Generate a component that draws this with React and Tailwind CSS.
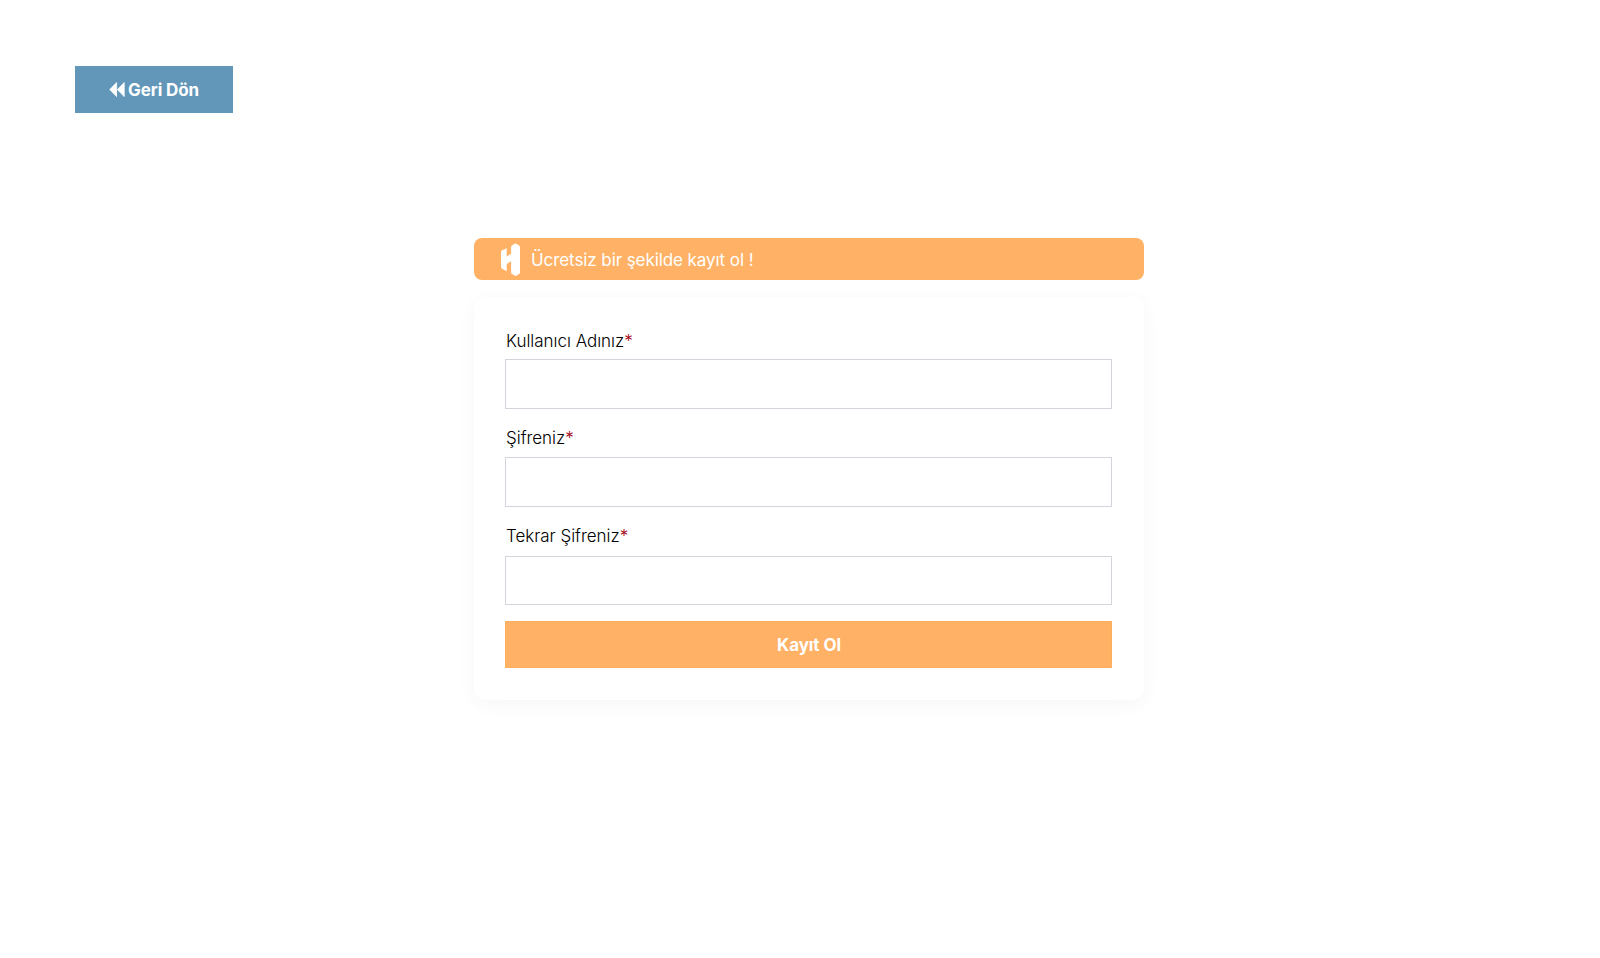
import { useState } from "react";

const fields = [
  { name: "username", label: "Kullanıcı Adınız", type: "text", box: "mt-[8px] h-[50px]", wrap: "" },
  { name: "password", label: "Şifreniz", type: "password", box: "mt-[9px] h-[50px]", wrap: "mt-[15px]" },
  { name: "passwordAgain", label: "Tekrar Şifreniz", type: "password", box: "mt-[10px] h-[49px]", wrap: "mt-[15px]" },
];

function BackIcon() {
  return (
    <svg width="16" height="16" viewBox="0 0 16 16" fill="white" stroke="white" strokeWidth="0.8" strokeLinejoin="round">
      <path d="M7.6.6V14.6L.8 7.6Z" />
      <path d="M15.2.6V14.6L8.4 7.6Z" />
    </svg>
  );
}

function Logo() {
  return (
    <svg width="19" height="34" viewBox="0 0 19 34" fill="white">
      <path d="M0 9.6Q0 8.8.7 8.4L5.7 6.2V14.6L10.1 11.8V5Q10.1 4 10.9 3.5L13.6 1.7Q14.5 1.2 15.4 1.7L18.1 3.4Q19 4 19 5V30.4Q19 31.3 18.2 31.9L15.5 33.6Q14.5 34.2 13.6 33.6L10.9 31.9Q10.1 31.4 10.1 30.4V19.3L5.7 22V29.2L.8 26.4Q0 25.9 0 25Z" />
    </svg>
  );
}

export default function App() {
  const [formData, setFormData] = useState({
    username: "",
    password: "",
    passwordAgain: "",
  });

  const handleChange = (e) => {
    setFormData({ ...formData, [e.target.name]: e.target.value });
  };

  return (
    <div className="h-screen bg-white pt-[66px] font-['Inter',sans-serif]">
      <button className="ml-[75px] flex h-[47px] w-[158px] items-center bg-[#6397b9] pl-[34px] text-[17px] font-bold tracking-[-0.1px] text-white">
        <BackIcon />
        <span className="pl-[3px] pt-[2px]">Geri Dön</span>
      </button>

      <div className="ml-[474px] mt-[125px] w-[670px]">
        {/* Banner */}
        <div className="flex h-[42px] items-center gap-[11px] rounded-lg bg-[#ffb266] pl-[27px] text-[17px] tracking-[-0.08px] text-white">
          <Logo />
          <p className="pt-[3px]">Ücretsiz bir şekilde kayıt ol !</p>
        </div>

        {/* Form */}
        <form
          onSubmit={(e) => e.preventDefault()}
          className="mt-[17px] h-[403px] rounded-xl bg-white pl-[31px] pr-8 pt-[30px] shadow-[0_4px_20px_rgba(0,0,0,0.04)]"
        >
          {fields.map((f) => (
            <div key={f.name} className={f.wrap}>
              <label htmlFor={f.name} className="block h-6 pl-px text-[17px] font-light leading-[29px] tracking-[-0.03px] text-black">
                {f.label}
                <span className="text-[#a30014]">*</span>
              </label>
              <input
                id={f.name}
                type={f.type}
                name={f.name}
                value={formData[f.name]}
                onChange={handleChange}
                className={`block w-full border border-[#d3d5dc] px-4 outline-none ${f.box}`}
              />
            </div>
          ))}
          <button className="mt-4 block h-[47px] w-full border border-[#ffaf5c] bg-[#ffb266] pl-px pt-[2px] text-[17px] font-bold tracking-[-0.1px] text-white">
            Kayıt Ol
          </button>
        </form>
      </div>
    </div>
  );
}
